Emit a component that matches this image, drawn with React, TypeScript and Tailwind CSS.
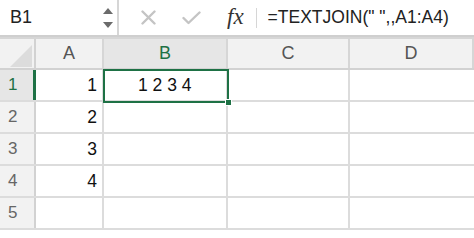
import React from 'react';

const font = { fontFamily: '"Liberation Sans", Arial, sans-serif' };
const cols = [
  { key: 'A', w: 'w-[68px]' },
  { key: 'B', w: 'w-[124px]' },
  { key: 'C', w: 'w-[122px]' },
  { key: 'D', w: 'flex-1' },
];
const rows = [1, 2, 3, 4, 5];

function FormulaBar() {
  return (
    <div className="flex h-[37px] border-b-2 border-[#cfcfcf] bg-white">
      <div className="w-[119px] flex items-center justify-between pl-[10px] pr-[4px] border-r-2 border-[#d6d6d6]">
        <span className="text-[18px] text-[#222]">B1</span>
        <div className="flex flex-col gap-[8px] items-center">
          <svg width="10" height="6" viewBox="0 0 10 6"><path d="M5 0 L10 6 L0 6 Z" fill="#6b6b6b" /></svg>
          <svg width="10" height="6" viewBox="0 0 10 6"><path d="M0 0 L10 0 L5 6 Z" fill="#6b6b6b" /></svg>
        </div>
      </div>
      <div className="flex items-center pl-[22px]">
        <svg width="15" height="15" viewBox="0 0 15 15">
          <path d="M1.5 1.5 L13.5 13.5 M13.5 1.5 L1.5 13.5" stroke="#c4c4c4" strokeWidth="2.4" strokeLinecap="round" />
        </svg>
        <svg width="19" height="14" viewBox="0 0 19 14" className="ml-[26px]">
          <path d="M1.5 7 L6.5 12 L17.5 1.5" stroke="#c4c4c4" strokeWidth="2.4" fill="none" strokeLinecap="round" strokeLinejoin="round" />
        </svg>
        <span className="ml-[26px] text-[23px] italic text-[#333]" style={{ fontFamily: '"Liberation Serif", "Times New Roman", serif' }}>fx</span>
        <div className="ml-[12px] w-[1px] h-[20px] bg-[#d6d6d6]" />
        <span className="ml-[11px] text-[17.5px] text-[#222]">=TEXTJOIN(" ",,A1:A4)</span>
      </div>
    </div>
  );
}

export default function App() {
  return (
    <div className="w-[474px] h-[238px] overflow-hidden bg-white" style={font}>
      <FormulaBar />
      <div className="h-[2px] bg-white border-b-2 border-[#d6d6d6]" />
      <div className="relative">
        <div className="flex h-[31px] bg-[#f2f2f2] border-b-2 border-[#d2d2d2]">
          <div className="w-[36px] border-r-2 border-[#d2d2d2] flex items-end justify-end pr-[2px] pb-[1px]">
            <svg width="22" height="22" viewBox="0 0 22 22"><path d="M22 0 L22 22 L0 22 Z" fill="#dcdcdc" /></svg>
          </div>
          {cols.map(c => (
            <div
              key={c.key}
              className={`${c.w} flex items-center justify-center text-[18px] border-r-2 border-[#d6d6d6] ${c.key === 'B' ? 'text-[#1e7145] bg-[#e6e6e6]' : 'text-[#555]'}`}
            >
              {c.key}
            </div>
          ))}
        </div>
        {rows.map(r => (
          <div key={r} className="flex h-[32px] border-b-2 border-[#dcdcdc]">
            <div className={`w-[36px] flex items-center pl-[8px] text-[17px] ${r === 1 ? 'bg-[#e6e6e6] text-[#1e7145] border-r-[3px] border-[#1e7145]' : 'bg-[#f2f2f2] text-[#666] border-r-2 border-[#d2d2d2]'}`}>
              {r}
            </div>
            <div className="w-[68px] flex items-center justify-end pr-[5px] text-[17.5px] text-[#111] border-r-2 border-[#dcdcdc]">
              {r <= 4 ? r : ''}
            </div>
            <div className="w-[124px] flex items-center pl-[34px] text-[17.5px] text-[#111] border-r-2 border-[#dcdcdc]">
              {r === 1 ? '1 2 3 4' : ''}
            </div>
            <div className="w-[122px] border-r-2 border-[#dcdcdc]" />
            <div className="flex-1" />
          </div>
        ))}
        <div className="absolute left-[103px] top-[30px] w-[126px] h-[34px] border-2 border-[#1e7145]" />
        <div className="absolute left-[225px] top-[60px] w-[7px] h-[7px] bg-[#1e7145] border border-white" />
      </div>
    </div>
  );
}
